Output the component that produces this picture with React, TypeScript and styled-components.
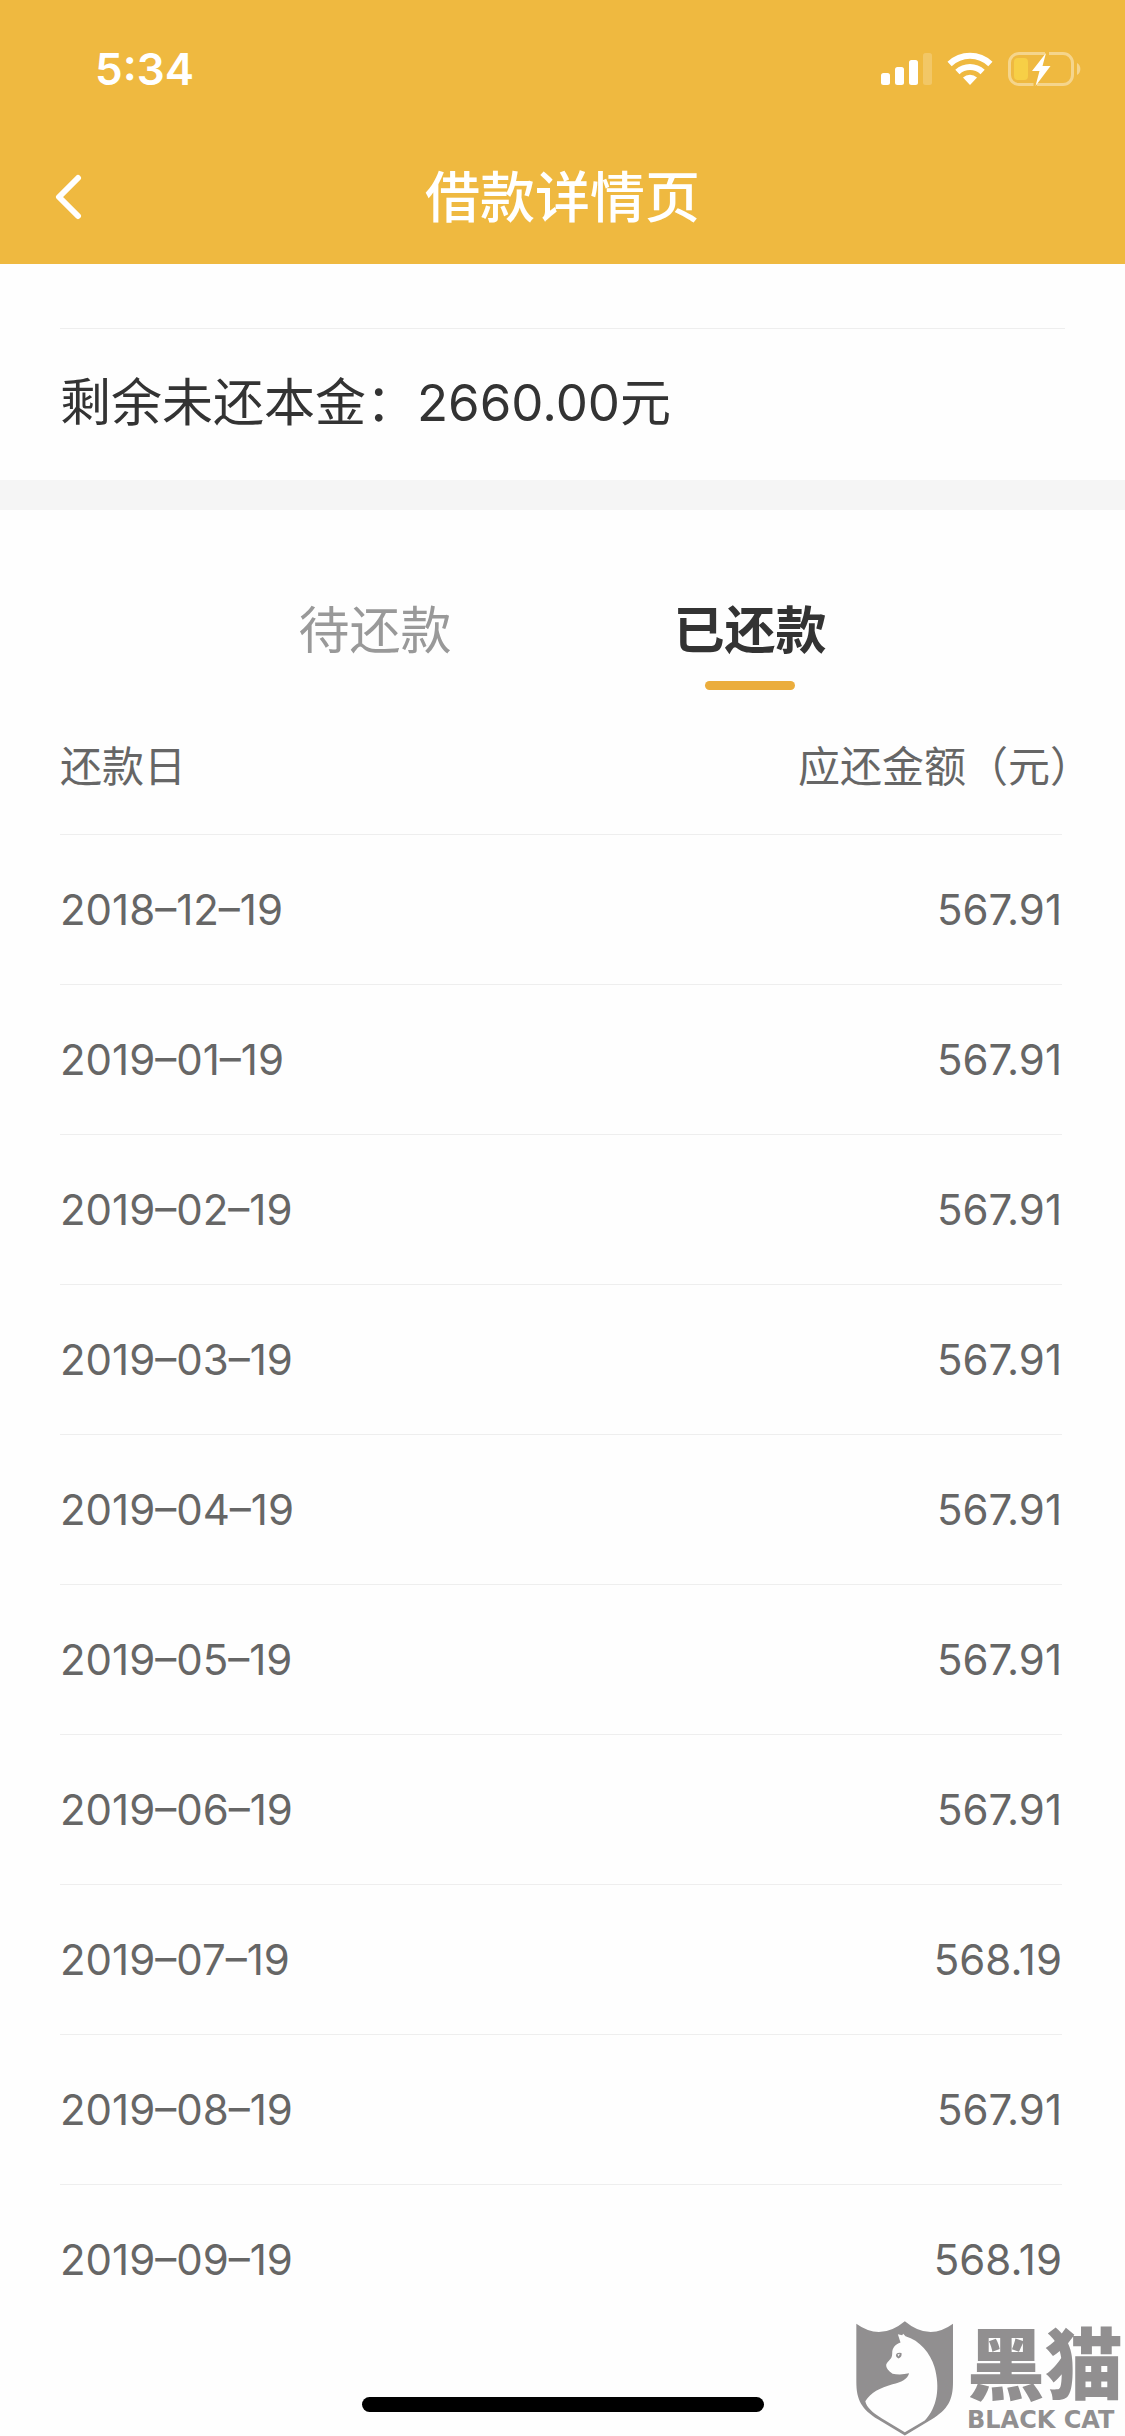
import React, { useState } from "react";
import styled, { createGlobalStyle } from "styled-components";

const GlobalStyle = createGlobalStyle`
  * { box-sizing: border-box; }
  body {
    margin: 0;
    background: #fefefe;
    color: #333333;
    font-family: Inter, "Noto Sans CJK SC", sans-serif;
  }
`;

const Page = styled.div`
  position: relative;
  display: flex;
  flex-direction: column;
  min-height: 100vh;
`;

const TopBar = styled.header`
  background: #efb940;
  color: #ffffff;
`;

const StatusBar = styled.div`
  display: flex;
  align-items: center;
  justify-content: space-between;
  height: 132px;
  padding: 6px 44px 0 95px;
`;

const Clock = styled.time`
  font-size: 44px;
  font-weight: 600;
  line-height: 54px;
`;

const StatusIcons = styled.svg`
  display: block;
  width: 200px;
  height: 34px;
`;

const NavBar = styled.nav`
  display: grid;
  grid-template-columns: 1fr auto 1fr;
  align-items: center;
  height: 132px;
  padding: 0 46px 2px;
`;

const BackButton = styled.button`
  justify-self: start;
  display: flex;
  padding: 8px;
  border: 0;
  background: none;
  color: inherit;
  cursor: pointer;
`;

const Title = styled.h1`
  margin: 0;
  font-size: 55px;
  font-weight: 500;
  line-height: 80px;
`;

const Summary = styled.section`
  padding: 64px 60px 0;
  border-bottom: 30px solid #f5f5f5;
`;

const SummaryText = styled.p`
  margin: 0;
  padding: 36px 0 39px;
  border-top: 1px solid #eeeeee;
  font-size: 51px;
  line-height: 76px;
`;

const Tabs = styled.div`
  display: grid;
  grid-template-columns: 1fr 1fr;
  padding: 83px calc(100% / 6) 0;
`;

const Tab = styled.button`
  display: flex;
  flex-direction: column;
  align-items: center;
  gap: 12px;
  padding: 0;
  border: 0;
  background: none;
  color: #999999;
  font-family: inherit;
  font-size: 51px;
  line-height: 76px;
  cursor: pointer;

  &::after {
    content: "";
    width: 90px;
    height: 9px;
    border-radius: 5px;
  }

  &[aria-selected="true"] {
    color: #333333;
    font-weight: 700;
  }

  &[aria-selected="true"]::after {
    background: #ebad3c;
  }
`;

const Panel = styled.main`
  padding: 0 63px 0 60px;
`;

const Schedule = styled.table`
  width: 100%;
  border-spacing: 0;
  color: #666666;
  font-size: 42px;
  line-height: 60px;
`;

const Cell = styled.td`
  height: 150px;
  padding: 0;
  border-bottom: 1px solid #eeeeee;
  font-weight: 400;
  text-align: left;

  &:last-child {
    text-align: right;
  }

  tbody tr:last-child & {
    border-bottom-color: transparent;
  }
`;

const HeadCell = styled(Cell)`
  height: 145px;
  padding-top: 10px;
`;

/* Lets the blank half of the full-width closing bracket hang past the column edge. */
const HangingLabel = styled.span`
  margin-right: -30px;
  white-space: nowrap;
`;

const Footer = styled.footer`
  display: flex;
  justify-content: center;
  margin-top: auto;
  padding-bottom: 24px;
`;

const HomeIndicator = styled.div`
  width: 402px;
  height: 15px;
  border-radius: 8px;
  background: #000000;
`;

const Watermark = styled.div`
  position: absolute;
  right: 2px;
  bottom: 0;
  display: flex;
  align-items: flex-end;
  gap: 14px;
  color: #918f90;
`;

const Brand = styled.div`
  display: flex;
  flex-direction: column;
  gap: 10px;
  padding-bottom: 4px;
`;

const BrandName = styled.span`
  font-family: "Noto Sans CJK SC", sans-serif;
  font-size: 78px;
  font-weight: 900;
  line-height: 76px;
`;

const BrandLatin = styled.span`
  font-family: "DejaVu Sans", sans-serif;
  font-size: 24px;
  font-weight: 700;
  line-height: 24px;
  white-space: nowrap;
`;

type Payment = { date: string; amount: string };

const paid: Payment[] = [
  { date: "2018–12–19", amount: "567.91" },
  { date: "2019–01–19", amount: "567.91" },
  { date: "2019–02–19", amount: "567.91" },
  { date: "2019–03–19", amount: "567.91" },
  { date: "2019–04–19", amount: "567.91" },
  { date: "2019–05–19", amount: "567.91" },
  { date: "2019–06–19", amount: "567.91" },
  { date: "2019–07–19", amount: "568.19" },
  { date: "2019–08–19", amount: "567.91" },
  { date: "2019–09–19", amount: "568.19" },
];

const tabs = ["待还款", "已还款"];

function DeviceStatus() {
  return (
    <StatusIcons viewBox="0 0 200 34" aria-hidden="true">
      <g fill="#fff">
        <rect x="0" y="21" width="9" height="12" rx="2.5" />
        <rect x="14" y="15" width="9" height="18" rx="2.5" />
        <rect x="28" y="8" width="9" height="25" rx="2.5" />
        <rect x="42" y="1" width="9" height="32" rx="2.5" opacity="0.2" />
        <path d="M66.500 9.800 A32.500 32.500 0 0 1 111.500 9.800 L107.300 14.200 A26.500 26.500 0 0 0 70.700 14.200 Z" />
        <path d="M74.300 17.800 A21.400 21.400 0 0 1 103.700 17.800 L99.500 22.200 A15.400 15.400 0 0 0 78.500 22.200 Z" />
        <path d="M82 25.500 A10.500 10.500 0 0 1 96 25.500 L89 33 Z" />
        <path d="M196 11 A7 7 0 0 1 196 23 Z" opacity="0.4" />
      </g>
      <path
        d="M164 1.500 H138 A9.500 9.500 0 0 0 128.500 11 V23 A9.500 9.500 0 0 0 138 32.500 H152.500 M156 32.500 H182 A9.500 9.500 0 0 0 191.500 23 V11 A9.500 9.500 0 0 0 182 1.500 H168"
        fill="none"
        stroke="#fff"
        strokeWidth="3"
        opacity="0.4"
      />
      <rect x="133" y="6" width="14" height="22" rx="4" fill="#f7cf46" />
      <path d="M165 1 L151 19 H158.500 L154.500 34 L169.500 14 H161.500 Z" fill="#fff" />
    </StatusIcons>
  );
}

function CatShield() {
  return (
    <svg width="97" height="116" viewBox="48 61 292 346" aria-hidden="true">
      <path
        d="M49 71 Q122 124 195 63 Q268 124 340 71 V245 C340 300 325 328 275 359 L195 407 L115 359 C65 328 49 300 49 245 Z"
        fill="#918f90"
      />
      <path
        d="M174 102 L187 105 L190 101 L197 108 C240 120 272 160 284 200 C302 262 293 322 255 362 L195 397 L125 355 C97 338 80 322 76 304 C92 278 120 264 158 253 C185 247 203 238 208 220 C190 224 172 224 158 221 C145 211 138 203 139 193 C145 180 157 178 157 160 C157 142 166 133 182 127 Z"
        fill="#fefefe"
      />
      <path d="M168 165 Q171 155 185 159 Q187 172 176 175 Q168 173 168 165 Z" fill="#918f90" />
      <path d="M173 163 L180 161 L176 169 Z" fill="#fefefe" />
    </svg>
  );
}

export default function App() {
  const [active, setActive] = useState(1);
  return (
    <Page>
      <GlobalStyle />
      <TopBar>
        <StatusBar>
          <Clock>5:34</Clock>
          <DeviceStatus />
        </StatusBar>
        <NavBar>
          <BackButton aria-label="返回">
            <svg width="28" height="46" viewBox="0 0 28 46" fill="none" aria-hidden="true">
              <path
                d="M24 4 L5 23 L24 42"
                stroke="currentColor"
                strokeWidth="6"
                strokeLinecap="round"
                strokeLinejoin="round"
              />
            </svg>
          </BackButton>
          <Title>借款详情页</Title>
        </NavBar>
      </TopBar>
      <Summary>
        <SummaryText>剩余未还本金：2660.00元</SummaryText>
      </Summary>
      <Tabs role="tablist">
        {tabs.map((label, i) => (
          <Tab key={label} role="tab" aria-selected={i === active} onClick={() => setActive(i)}>
            {label}
          </Tab>
        ))}
      </Tabs>
      <Panel>
        <Schedule>
          <thead>
            <tr>
              <HeadCell as="th" scope="col">还款日</HeadCell>
              <HeadCell as="th" scope="col">
                <HangingLabel>应还金额（元）</HangingLabel>
              </HeadCell>
            </tr>
          </thead>
          <tbody>
            {paid.map((p) => (
              <tr key={p.date}>
                <Cell>{p.date}</Cell>
                <Cell>{p.amount}</Cell>
              </tr>
            ))}
          </tbody>
        </Schedule>
      </Panel>
      <Footer>
        <HomeIndicator />
      </Footer>
      <Watermark>
        <CatShield />
        <Brand>
          <BrandName>黑猫</BrandName>
          <BrandLatin>BLACK CAT</BrandLatin>
        </Brand>
      </Watermark>
    </Page>
  );
}
